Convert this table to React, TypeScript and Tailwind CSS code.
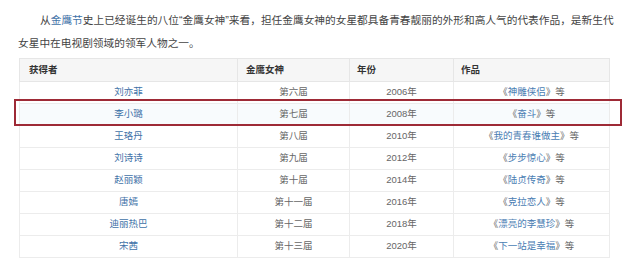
import { FC } from 'react'

type Row = { name: string; term: string; year: string; work: string }

const rows: Row[] = [
  { name: '刘亦菲', term: '第六届', year: '2006年', work: '神雕侠侣' },
  { name: '李小璐', term: '第七届', year: '2008年', work: '奋斗' },
  { name: '王珞丹', term: '第八届', year: '2010年', work: '我的青春谁做主' },
  { name: '刘诗诗', term: '第九届', year: '2012年', work: '步步惊心' },
  { name: '赵丽颖', term: '第十届', year: '2014年', work: '陆贞传奇' },
  { name: '唐嫣', term: '第十一届', year: '2016年', work: '克拉恋人' },
  { name: '迪丽热巴', term: '第十二届', year: '2018年', work: '漂亮的李慧珍' },
  { name: '宋茜', term: '第十三届', year: '2020年', work: '下一站是幸福' },
]

const font = { fontFamily: '"Liberation Sans", "Noto Sans CJK SC", sans-serif' }

const App: FC = () => {
  return (
    <div className="w-[640px] h-[265px] bg-white overflow-hidden" style={font}>
      <p className="pl-[18px] pt-[9px] text-[10.7px] leading-[23px] text-[#444]">
        <span className="block whitespace-nowrap indent-[22px]">
          从<span className="text-[#3f72a8]">金鹰节</span>史上已经诞生的八位“金鹰女神”来看，担任金鹰女神的女星都具备青春靓丽的外形和高人气的代表作品，是新生代
        </span>
        <span className="block">女星中在电视剧领域的领军人物之一。</span>
      </p>

      <div className="relative ml-[19px] mt-[3px] w-[591px]">
        <table className="w-full border-collapse border border-[#e6e6e6] text-[9.5px] text-[#666]">
          <colgroup>
            <col className="w-[218px]" />
            <col className="w-[112px]" />
            <col className="w-[104px]" />
            <col />
          </colgroup>
          <thead>
            <tr className="h-[23px] bg-[#f6f6f6] text-[#333] font-bold text-left">
              <th className="pl-[9px] border border-[#e6e6e6]">获得者</th>
              <th className="pl-[8px] border border-[#e6e6e6]">金鹰女神</th>
              <th className="pl-[7px] border border-[#e6e6e6]">年份</th>
              <th className="pl-[7px] border border-[#e6e6e6]">作品</th>
            </tr>
          </thead>
          <tbody>
            {rows.map((r, i) => (
              <tr key={r.name} className={`h-[22px] text-center ${i === 1 ? 'bg-[#f8fbfd]' : ''}`}>
                <td className="border border-[#ececec] text-[#3f72a8]">{r.name}</td>
                <td className="border border-[#ececec]">{r.term}</td>
                <td className="border border-[#ececec]">{r.year}</td>
                <td className="border border-[#ececec]">
                  《<span className="text-[#4a7db3]">{r.work}</span>》等
                </td>
              </tr>
            ))}
          </tbody>
        </table>
        {/* highlight box over 李小璐 row */}
        <div className="absolute left-[-5px] top-[41px] w-[608px] h-[27px] border-2 border-[#9e2a36] pointer-events-none" />
      </div>
    </div>
  )
}

export default App
